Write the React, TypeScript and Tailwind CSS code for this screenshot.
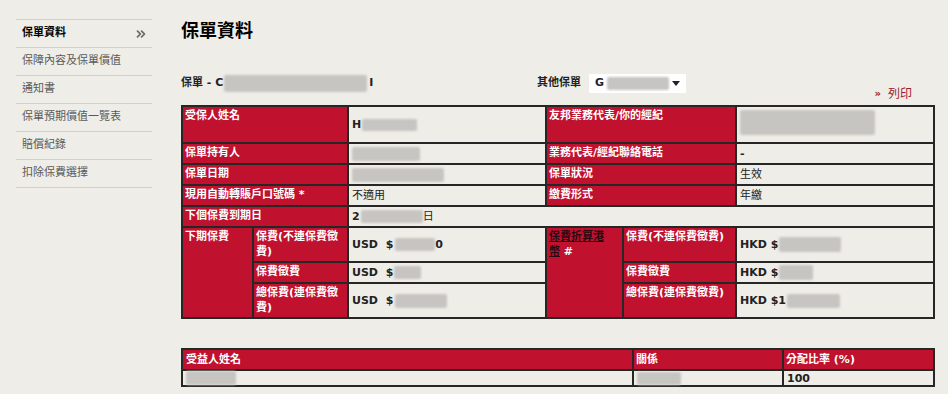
import { ChevronsRight } from "lucide-react";

const menu = [
  "保單資料",
  "保障內容及保單價值",
  "通知書",
  "保單預期價值一覽表",
  "賠償紀錄",
  "扣除保費選擇",
];

// redacted values in the screenshot are gray smudges
function Blur({ className = "" }: { className?: string }) {
  return (
    <span
      className={`inline-block align-middle bg-[#c7c5c2] blur-[1px] rounded-[2px] ${className}`}
    />
  );
}

function Label({ children, className = "" }: { children: React.ReactNode; className?: string }) {
  return (
    <div
      className={`bg-[#c0112f] text-white font-bold text-[11px] leading-[15px] px-[2px] pt-[1px] ${className}`}
    >
      {children}
    </div>
  );
}

function Value({ children, className = "" }: { children?: React.ReactNode; className?: string }) {
  return (
    <div
      className={`bg-[#efede8] text-[#222] text-[11px] leading-[15px] px-[3px] flex items-center whitespace-nowrap ${className}`}
    >
      {children}
    </div>
  );
}

export default function App() {
  return (
    <div className="w-[948px] h-[394px] overflow-hidden bg-[#efede8] flex font-['DejaVu_Sans','Noto_Sans_CJK_TC',sans-serif] text-[#222]">
      {/* Sidebar */}
      <nav className="ml-[16px] mt-[19px] w-[136px] self-start border-t border-[#d3d0ca]">
        {menu.map((item, i) => (
          <div
            key={item}
            className={`h-[28px] border-b border-[#d3d0ca] flex items-center justify-between pl-[6px] pr-[4px] text-[11px] ${
              i === 0 ? "font-bold text-black" : "text-[#5a5a5a]"
            }`}
          >
            <span>{item}</span>
            {i === 0 && <ChevronsRight size={14} strokeWidth={3} className="text-[#6a6a6a]" />}
          </div>
        ))}
      </nav>

      {/* Main */}
      <main className="ml-[29px] pt-[20px] w-[754px]">
        <h1 className="text-[18px] leading-[22px] font-bold text-black">保單資料</h1>

        <div className="mt-[32px] h-[31px] flex items-start">
          <div className="w-[356px] h-[19px] flex items-center text-[11px] font-bold">
            <span>保單 - C</span>
            <Blur className="w-[143px] h-[17px] ml-[1px]" />
            <span className="ml-[2px]">I</span>
          </div>
          <div className="h-[19px] flex items-center text-[11px] font-bold">其他保單</div>
          <div className="ml-[8px] w-[97px] h-[19px] bg-white flex items-center px-[6px] text-[11px] font-bold">
            <span>G</span>
            <Blur className="w-[62px] h-[13px] ml-[3px]" />
            <svg width="8" height="5" viewBox="0 0 8 5" className="ml-auto">
              <polygon points="0,0 8,0 4,5" fill="#222" />
            </svg>
          </div>
          <div className="ml-auto mr-[23px] self-end mb-[4px] text-[12px] leading-[14px] text-[#9b1b2b] flex items-center gap-[7px]">
            <span className="text-[10px] font-bold">»</span>
            <span>列印</span>
          </div>
        </div>

        {/* Policy table */}
        <div className="grid grid-cols-[69px_93px_196px_75px_111px_196px] grid-rows-[35px_19px_19px_19px_19px_33px_19px_33px] gap-[2px] bg-[#262626] p-[2px]">
          <Label className="col-span-2">受保人姓名</Label>
          <Value>
            <span className="font-bold">H</span>
            <Blur className="w-[55px] h-[12px] ml-[1px]" />
          </Value>
          <Label className="col-span-2">友邦業務代表/你的經紀</Label>
          <Value className="items-start pt-[3px]">
            <Blur className="w-[135px] h-[25px]" />
          </Value>

          <Label className="col-span-2">保單持有人</Label>
          <Value>
            <Blur className="w-[68px] h-[14px]" />
          </Value>
          <Label className="col-span-2">業務代表/經紀聯絡電話</Label>
          <Value className="font-bold">-</Value>

          <Label className="col-span-2">保單日期</Label>
          <Value>
            <Blur className="w-[92px] h-[14px]" />
          </Value>
          <Label className="col-span-2">保單狀況</Label>
          <Value>生效</Value>

          <Label className="col-span-2">現用自動轉賬戶口號碼 *</Label>
          <Value>不適用</Value>
          <Label className="col-span-2">繳費形式</Label>
          <Value>年繳</Value>

          <Label className="col-span-2">下個保費到期日</Label>
          <Value className="col-span-4">
            <span className="font-bold">2</span>
            <Blur className="w-[62px] h-[13px] ml-[1px]" />
            <span>日</span>
          </Value>

          <Label className="row-span-3">下期保費</Label>
          <Label>保費(不連保費徵費)</Label>
          <Value className="font-bold">
            USD&nbsp;&nbsp;$
            <Blur className="w-[40px] h-[13px] ml-[2px]" />
            <span>0</span>
          </Value>
          <Label className="row-span-3">
            <span className="text-[#2a0a10] underline">保費折算港</span>
            <br />
            <span className="text-[#2a0a10] underline">幣</span> #
          </Label>
          <Label>保費(不連保費徵費)</Label>
          <Value className="font-bold">
            HKD $
            <Blur className="w-[62px] h-[15px] ml-[1px]" />
          </Value>

          <Label>保費徵費</Label>
          <Value className="font-bold">
            USD&nbsp;&nbsp;$
            <Blur className="w-[27px] h-[13px] ml-[1px]" />
          </Value>
          <Label>保費徵費</Label>
          <Value className="font-bold">
            HKD $
            <Blur className="w-[34px] h-[15px] ml-[1px]" />
          </Value>

          <Label>總保費(連保費徵費)</Label>
          <Value className="font-bold">
            USD&nbsp;&nbsp;$
            <Blur className="w-[52px] h-[14px] ml-[2px]" />
          </Value>
          <Label>總保費(連保費徵費)</Label>
          <Value className="font-bold">
            HKD $1
            <Blur className="w-[53px] h-[14px] ml-[1px]" />
          </Value>
        </div>

        {/* Beneficiary table */}
        <div className="mt-[29px] grid grid-cols-[449px_148px_149px] grid-rows-[19px_14px] gap-[2px] bg-[#262626] p-[2px]">
          <Label className="pl-[3px] pt-[2px]">受益人姓名</Label>
          <Label className="pt-[2px]">關係</Label>
          <Label className="pt-[2px]">分配比率 (%)</Label>
          <Value className="px-0">
            <Blur className="w-[50px] h-[14px]" />
          </Value>
          <Value className="px-0">
            <Blur className="w-[44px] h-[13px]" />
          </Value>
          <Value className="font-bold px-[1px]">100</Value>
        </div>
      </main>
    </div>
  );
}
